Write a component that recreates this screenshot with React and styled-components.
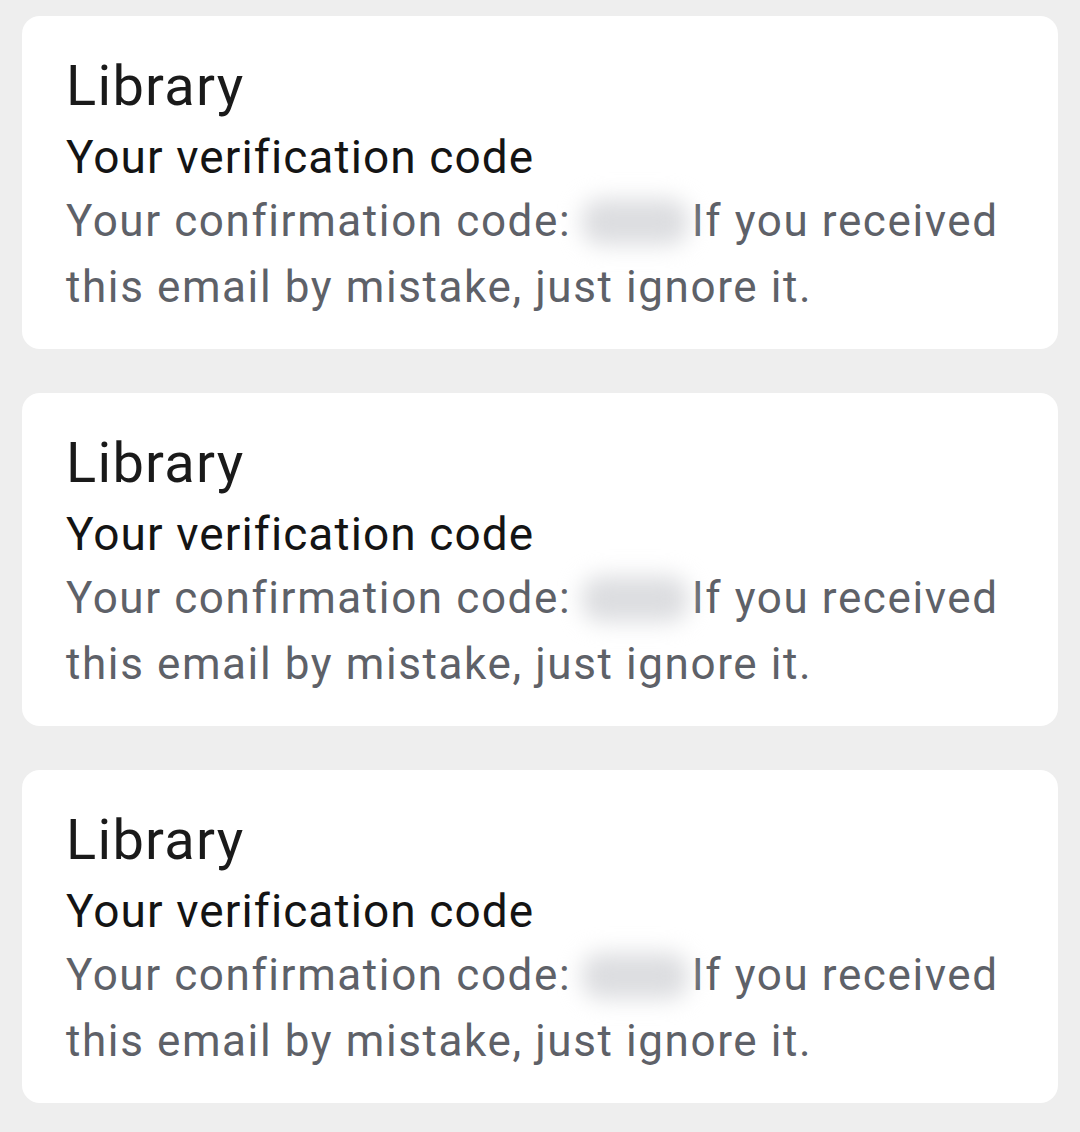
import styled, { createGlobalStyle } from 'styled-components';

const GlobalStyle = createGlobalStyle`
  html, body {
    margin: 0;
    padding: 0;
    background: #eeeeee;
  }
  body {
    font-family: Roboto, "Noto Sans", sans-serif;
    -webkit-font-smoothing: antialiased;
  }
`;

const messages = [
  { id: 1, sender: 'Library', subject: 'Your verification code' },
  { id: 2, sender: 'Library', subject: 'Your verification code' },
  { id: 3, sender: 'Library', subject: 'Your verification code' },
];

const App = () => (
  <>
    <GlobalStyle />
    <Page>
      {messages.map(msg => (
        <Card key={msg.id}>
          <Sender>{msg.sender}</Sender>
          <Subject>{msg.subject}</Subject>
          <Preview>
            Your confirmation code: <Hidden aria-hidden="true" />If you received this email by mistake, just ignore it.
          </Preview>
        </Card>
      ))}
    </Page>
  </>
);

const Page = styled.div`
  display: flex;
  flex-direction: column;
  gap: 44px;
  padding: 16px 22px 29px 22px;
  min-height: 100vh;
  box-sizing: border-box;
`;

const Card = styled.div`
  background: #ffffff;
  border-radius: 18px;
  padding: 36px 40px 29px 44px;
  display: flex;
  flex-direction: column;
`;

const Sender = styled.div`
  font-size: 56px;
  line-height: 68px;
  letter-spacing: 1.3px;
  color: #1a1a1a;
`;

const Subject = styled.div`
  margin-top: 6px;
  font-size: 46px;
  line-height: 62px;
  letter-spacing: 1.1px;
  color: #141414;
`;

const Preview = styled.div`
  font-size: 44px;
  line-height: 66px;
  letter-spacing: 1.6px;
  color: #5e6168;
`;

const Hidden = styled.span`
  display: inline-block;
  width: 106px;
  height: 46px;
  margin: 0 4px 0 -2px;
  vertical-align: -9px;
  background: #dcdde0;
  border-radius: 18px;
  filter: blur(11px);
`;

export default App;
